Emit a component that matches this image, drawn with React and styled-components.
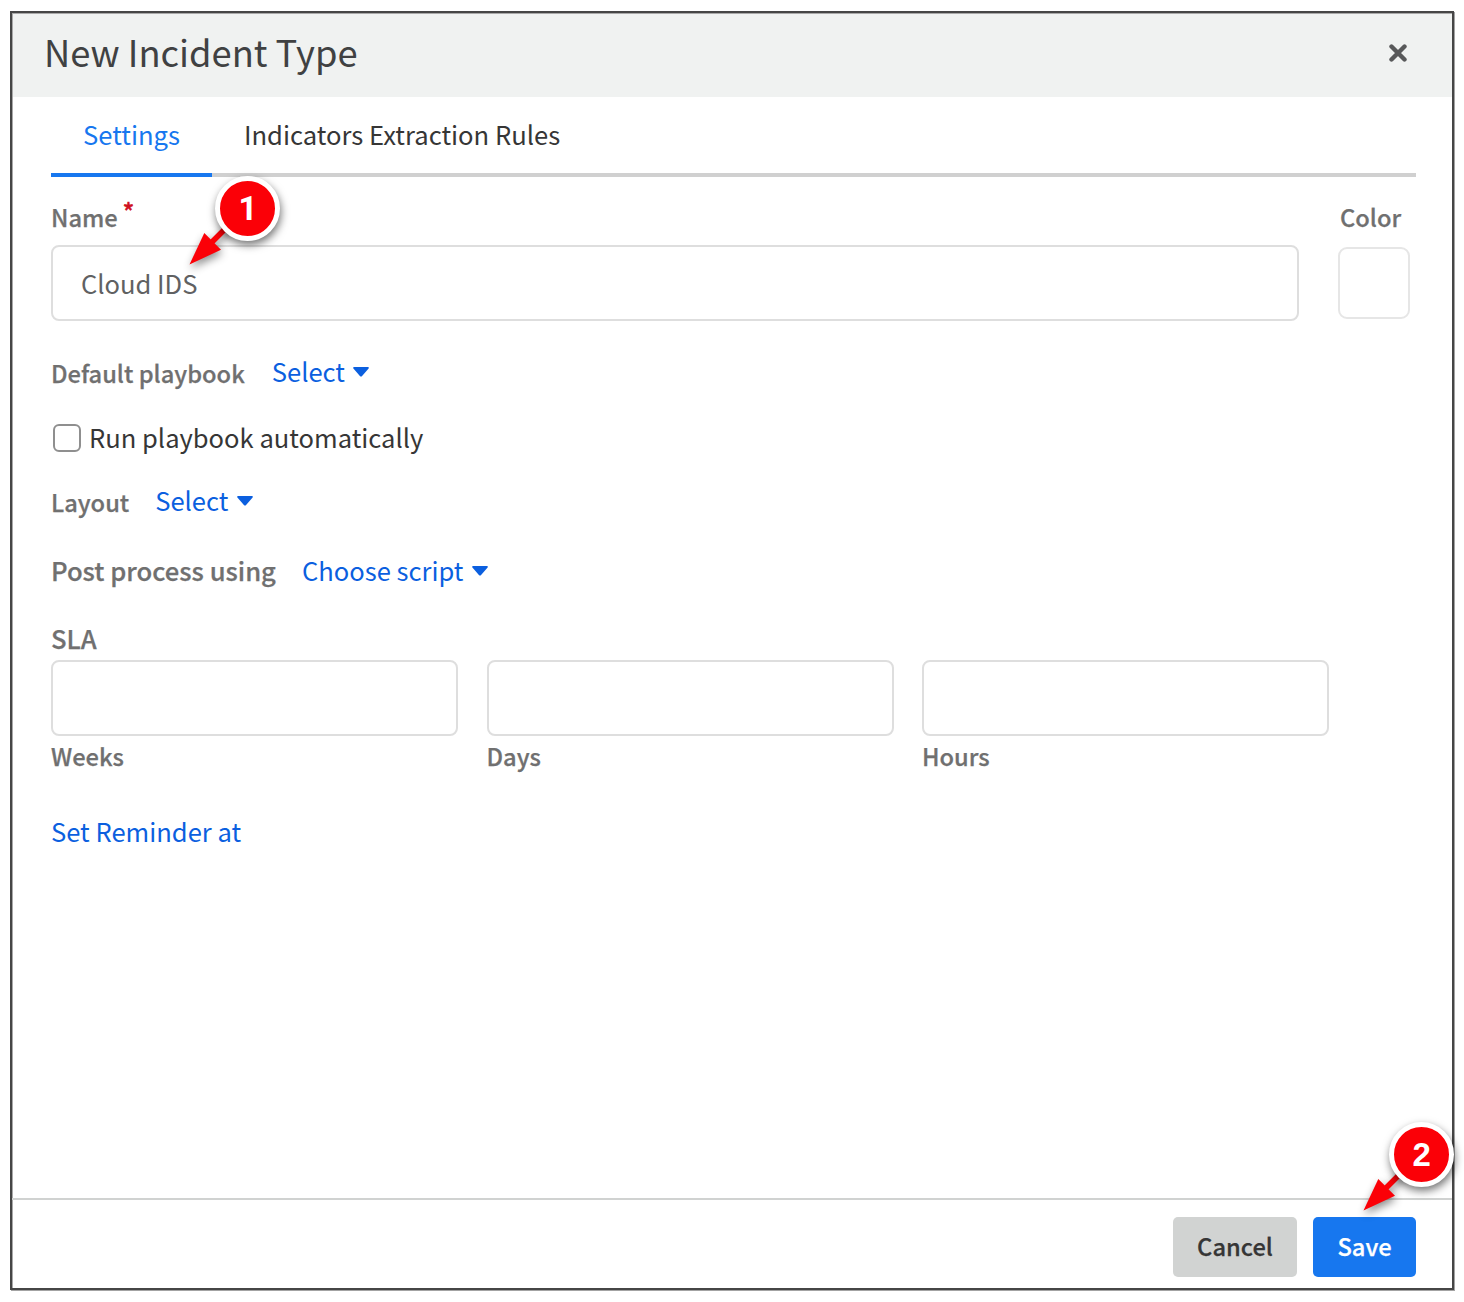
import React from "react";
import styled, { createGlobalStyle } from "styled-components";

const GlobalStyle = createGlobalStyle`
  *, *::before, *::after { box-sizing: border-box; }
  body {
    margin: 0;
    background: #fff;
    font-family: "Noto Sans CJK SC", "Noto Sans", sans-serif;
    font-size: 25.55px;
    line-height: 36px;
    color: #363636;
  }
`;

const Page = styled.div`
  width: 1464px;
  height: 1302px;
  padding: 11px 0 0 10px;
  overflow: hidden;
`;

const Dialog = styled.section`
  position: relative;
  display: flex;
  flex-direction: column;
  width: 1444px;
  height: 1279px;
  border: 2px solid #464646;
  box-shadow: 1px 1px 0 #a3a3a3, inset 1px 1px 0 #a9a9a9;
`;

const Header = styled.header`
  display: flex;
  align-items: flex-start;
  justify-content: space-between;
  height: 83px;
  margin: 1px 0 0 1px;
  padding: 11px 45px 0 31px;
  background: #f0f2f1;
`;

const Title = styled.h1`
  margin: 0;
  font-size: 36.3px;
  font-weight: 400;
  line-height: 52px;
  color: #404142;
`;

const CloseButton = styled.button`
  display: flex;
  margin-top: 18.5px;
  padding: 0;
  border: 0;
  background: none;
`;

const Tabs = styled.nav`
  display: flex;
  height: 80px;
  margin: 0 36px 0 39px;
  border-bottom: 4px solid #d0d0d0;
  font-size: 25.6px;
`;

const Tab = styled.a`
  display: flex;
  align-items: center;
  height: 80px;
  padding: 0 32px 2px;
  border-bottom: 4px solid ${(p) => (p.$active ? "#1777ef" : "transparent")};
  color: ${(p) => (p.$active ? "#1777ef" : "#363636")};
`;

const Form = styled.form`
  display: flex;
  flex: 1;
  flex-direction: column;
  padding: 0 42px 0 39px;
`;

const NameRow = styled.div`
  display: flex;
  justify-content: space-between;
`;

const Column = styled.div`
  display: flex;
  flex-direction: column;
  width: ${(p) => p.$width};
`;

const Label = styled.label`
  font-size: ${(p) => (p.$large ? "25.6px" : "23.7px")};
  font-weight: 500;
  line-height: 36px;
  color: #707070;
  -webkit-text-stroke: 0.25px #707070;
`;

const TopLabel = styled(Label)`
  display: flex;
  height: 68px;
  padding: 22px 0 0 ${(p) => p.$indent || "0"};
`;

const Required = styled.span`
  margin: -6px 0 0 5px;
  font-size: 23.7px;
  color: #d0121f;
  -webkit-text-stroke: 0.5px #d0121f;
`;

const TextField = styled.input`
  width: 100%;
  height: 76px;
  padding: 0 28px 2px;
  border: 2px solid #dedede;
  border-radius: 8px;
  outline: none;
  background: #fff;
  font: inherit;
  color: #606162;
`;

const ColorSwatch = styled.div`
  width: 72px;
  height: 72px;
  margin-top: 2px;
  border: 2px solid #e6e6e6;
  border-radius: 9px;
`;

const PickerRow = styled.div`
  display: flex;
  gap: ${(p) => p.$gap || "26px"};
  height: 36px;
  margin-top: ${(p) => p.$top};

  ${Label} {
    padding-top: ${(p) => p.$labelDrop || "0"};
  }
`;

const Picker = styled.a`
  display: flex;
  align-items: flex-start;
  gap: 8.5px;
  height: 36px;
  color: #0b5fdf;

  svg {
    margin-top: 14px;
  }
`;

const CheckRow = styled.label`
  display: flex;
  height: 36px;
  margin-top: 30px;
  padding-left: 2px;
`;

const Checkbox = styled.input`
  appearance: none;
  width: 28px;
  height: 28px;
  margin: 5px 8px 0 0;
  border: 2px solid #8f8f8f;
  border-radius: 6px;
  background: #fff;
`;

const SlaLabel = styled(Label)`
  height: 40px;
  margin-top: 32px;
`;

const SlaGrid = styled.div`
  display: grid;
  grid-template-columns: repeat(3, 407px);
  gap: 28.5px;
`;

const UnitLabel = styled(Label)`
  padding-top: 2px;
`;

const ReminderLink = styled.a`
  margin-top: 39px;
  color: #0b5fdf;
`;

const Footer = styled.footer`
  display: flex;
  justify-content: flex-end;
  gap: 16px;
  height: 90px;
  padding: 17px 36px 0 0;
  border-top: 2px solid #d0d2d1;
`;

const Button = styled.button`
  width: ${(p) => p.$width};
  height: 60px;
  padding: 0 0 2px;
  border: 0;
  border-radius: 5px;
  background: ${(p) => (p.$primary ? "#1777ef" : "#d1d3d2")};
  font-family: inherit;
  font-size: 23.7px;
  font-weight: 500;
  line-height: 36px;
  color: ${(p) => (p.$primary ? "#fff" : "#363636")};
  -webkit-text-stroke: 0.25px ${(p) => (p.$primary ? "#fff" : "#363636")};
`;

const Marker = styled.div`
  position: absolute;
  left: ${(p) => p.$left}px;
  top: ${(p) => p.$top}px;
  width: 100px;
  height: 100px;
`;

const MarkerArrow = styled.svg`
  position: absolute;
  inset: 0;
  overflow: visible;
  filter: drop-shadow(1px 4px 4px rgba(0, 0, 0, 0.45));
`;

const MarkerBadge = styled.span`
  position: absolute;
  left: 35px;
  top: 2px;
  display: flex;
  align-items: center;
  justify-content: center;
  width: 65px;
  height: 65px;
  padding: 1px 0 0 ${(p) => p.$nudge || "0"};
  border: 5px solid #fff;
  border-radius: 50%;
  background: #fb0007;
  box-shadow: 1px 4px 8px rgba(0, 0, 0, 0.55);
  font-family: ${(p) => p.$font}, Arial, sans-serif;
  font-size: 33px;
  font-weight: 700;
  line-height: 34px;
  color: #fff;
`;

const Caret = () => (
  <svg width="16" height="10" viewBox="0 0 16 10">
    <path d="M1.2 0H14.8Q16.6 .2 15.4 1.7L9.1 8.9Q8 10 6.9 8.9L.6 1.7Q-.6 .2 1.2 0Z" fill="#0b5fdf" />
  </svg>
);

const Select = ({ label, value, ...row }) => (
  <PickerRow {...row}>
    <Label $large={row.$large}>{label}</Label>
    <Picker>
      {value}
      <Caret />
    </Picker>
  </PickerRow>
);

const Step = ({ number, left, top, font, nudge }) => (
  <Marker $left={left} $top={top}>
    <MarkerArrow viewBox="0 0 100 100" width="100" height="100">
      <path d="M50 50L28 72" stroke="#fb0007" strokeWidth="5.5" />
      <path d="M9.5 90.5L24.3 59L41 75.7Z" fill="#fb0007" />
    </MarkerArrow>
    <MarkerBadge $font={font} $nudge={nudge}>{number}</MarkerBadge>
  </Marker>
);

export default function App() {
  return (
    <Page>
      <GlobalStyle />
      <Dialog>
        <Header>
          <Title>New Incident Type</Title>
          <CloseButton type="button" aria-label="Close">
            <svg width="18" height="18" viewBox="0 0 18 18">
              <path d="M2.5 2.5L15.5 15.5M15.5 2.5L2.5 15.5" stroke="#58595a" strokeWidth="4.4" strokeLinecap="round" />
            </svg>
          </CloseButton>
        </Header>
        <Tabs>
          <Tab $active>Settings</Tab>
          <Tab>Indicators Extraction Rules</Tab>
        </Tabs>
        <Form>
          <NameRow>
            <Column $width="1248px">
              <TopLabel>
                Name<Required>*</Required>
              </TopLabel>
              <TextField defaultValue="Cloud IDS" />
            </Column>
            <Column $width="72px">
              <TopLabel $indent="2px">Color</TopLabel>
              <ColorSwatch />
            </Column>
          </NameRow>
          <Select label="Default playbook" value="Select" $top="32px" $labelDrop="2px" $gap="27px" />
          <CheckRow>
            <Checkbox type="checkbox" />
            Run playbook automatically
          </CheckRow>
          <Select label="Layout" value="Select" $top="27px" $labelDrop="2px" />
          <Select label="Post process using" value="Choose script" $top="34px" $large />
          <SlaLabel $large>SLA</SlaLabel>
          <SlaGrid>
            {["Weeks", "Days", "Hours"].map((unit) => (
              <Column key={unit}>
                <TextField />
                <UnitLabel>{unit}</UnitLabel>
              </Column>
            ))}
          </SlaGrid>
          <ReminderLink>Set Reminder at</ReminderLink>
        </Form>
        <Footer>
          <Button type="button" $width="124px">Cancel</Button>
          <Button type="button" $width="103px" $primary>Save</Button>
        </Footer>
        <Step number="1" left={167.5} top={160.5} font="Roboto" nudge="2px" />
        <Step number="2" left={1342.2} top={1106.7} font='"Liberation Sans"' />
      </Dialog>
    </Page>
  );
}
